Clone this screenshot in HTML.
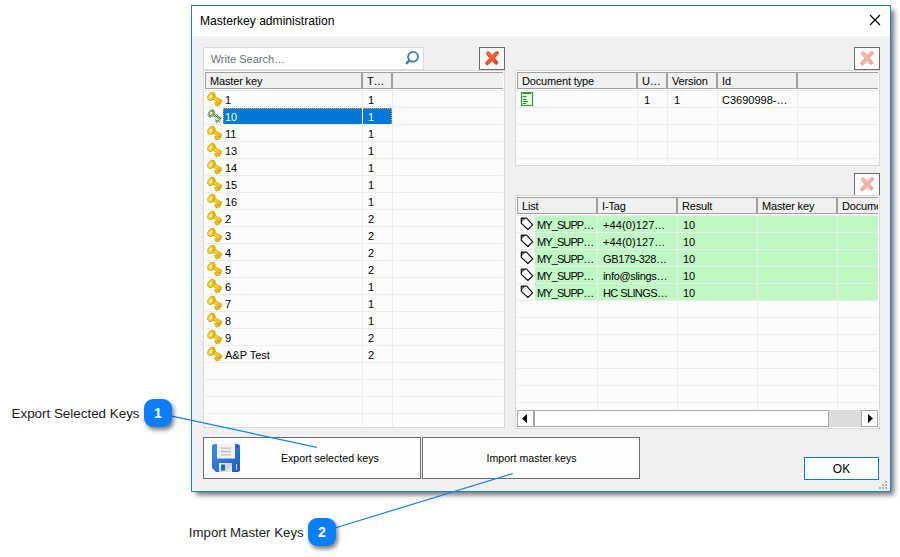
<!DOCTYPE html><html><head><meta charset="utf-8"><style>
*{margin:0;padding:0;box-sizing:border-box}
html,body{width:900px;height:557px;overflow:hidden;background:#fff;font-family:"Liberation Sans",sans-serif;color:#000}
div,svg{position:absolute}
.t{white-space:nowrap;font-size:11px;line-height:13px}
.grid{background:#fcfcfc;border:1px solid #d9d9d9;overflow:hidden}
.ht{letter-spacing:-.15px}
.hdr{background:#f0f0f0;border-top:1px solid #a0a0a0;border-bottom:1px solid #a0a0a0;border-left:1px solid #a0a0a0}
.hl{background:#a0a0a0}
.rl{height:1px;background:#ececec}
.cl{width:1px;background:#ececec}
.btnx{width:26px;height:23px;border:1px solid #6a6a6a;background:#fcfcfc}
.btn{border:1px solid #6d6d6d;background:#fdfdfd}
.badge{width:28px;height:28px;border-radius:9px;background:#0a7ef9;color:#fff;font-weight:bold;font-size:14px;line-height:28px;text-align:center;box-shadow:2px 3px 4px rgba(0,0,0,.5)}
.callt{font-size:13.4px;line-height:16px;color:#1a1a1a;white-space:nowrap}
</style></head><body>
<svg width="0" height="0"><defs><linearGradient id="gold" x1="0" y1="0" x2="1" y2="1"><stop offset="0" stop-color="#ffe14a"/><stop offset=".6" stop-color="#f2c400"/><stop offset="1" stop-color="#d9a800"/></linearGradient><pattern id="chk" width="2" height="2" patternUnits="userSpaceOnUse"><rect width="2" height="2" fill="#1f7fd0"/><rect width="1" height="1" fill="#f0d020"/><rect x="1" y="1" width="1" height="1" fill="#f0d020"/></pattern><linearGradient id="redx" x1="0" y1="0" x2="1" y2="1"><stop offset="0" stop-color="#ff7a50"/><stop offset="1" stop-color="#f03a10"/></linearGradient><linearGradient id="flop" x1="0" y1="0" x2="1" y2="1"><stop offset="0" stop-color="#3f8ee6"/><stop offset="1" stop-color="#1a5cc0"/></linearGradient><linearGradient id="shut" x1="0" y1="0" x2="1" y2="1"><stop offset="0" stop-color="#f4f4f4"/><stop offset=".5" stop-color="#d0d0d0"/><stop offset="1" stop-color="#f0f0f0"/></linearGradient></defs></svg>
<div style="left:191px;top:5px;width:700px;height:487px;border:1px solid #1c7fd6;background:#f0f0f0;box-shadow:4px 4px 5px -1px rgba(0,0,0,.55)"></div>
<div style="left:192px;top:6px;width:698px;height:30px;background:#fff"></div>
<div class="t" style="left:200px;top:14px;font-size:12.1px;line-height:14px">Masterkey administration</div>
<svg style="left:869px;top:14px" width="12" height="12" viewBox="0 0 12 12"><path d="M1 1L11 11M11 1L1 11" stroke="#000" stroke-width="1.1"/></svg>
<div style="left:203px;top:47px;width:221px;height:23px;background:#fff;border:1px solid #dcdcdc"></div>
<div class="t" style="left:210.7px;top:53px;color:#6b6d78">Write Search…</div>
<svg style="left:403px;top:50px" width="18" height="18" viewBox="0 0 18 18"><circle cx="10" cy="6.8" r="4.9" fill="none" stroke="#3d7ab8" stroke-width="1.9"/><path d="M6.4 10.4L3 13.8" stroke="#3d7ab8" stroke-width="2.4"/></svg>
<div class="btnx" style="left:479px;top:47px"></div>
<svg style="left:484px;top:50px;opacity:1" width="16" height="16" viewBox="0 0 16 16"><path d="M2.5 3.2C3.2 1.6 4.6 1.3 5.6 2.6L8.2 5.6 11.6 2C12.6 1.2 14.4 1.6 14.4 2.8 14.6 3.6 13.6 4.6 10.4 8L13.6 11.6C14.4 12.8 13.4 14.6 11.8 14.4L8.2 10.6 4.2 14.6C3 15.2 1.4 14.4 1.6 13 1.8 12.2 2.6 11.6 6 8.2L3 4.8C2.6 4.2 2.4 3.7 2.5 3.2Z" fill="url(#redx)" stroke="#cc2a08" stroke-width=".8"/></svg>
<div class="btnx" style="left:854px;top:47px"></div>
<svg style="left:859px;top:50px;opacity:.45" width="16" height="16" viewBox="0 0 16 16"><path d="M2.5 3.2C3.2 1.6 4.6 1.3 5.6 2.6L8.2 5.6 11.6 2C12.6 1.2 14.4 1.6 14.4 2.8 14.6 3.6 13.6 4.6 10.4 8L13.6 11.6C14.4 12.8 13.4 14.6 11.8 14.4L8.2 10.6 4.2 14.6C3 15.2 1.4 14.4 1.6 13 1.8 12.2 2.6 11.6 6 8.2L3 4.8C2.6 4.2 2.4 3.7 2.5 3.2Z" fill="url(#redx)" stroke="#cc2a08" stroke-width=".8"/></svg>
<div class="btnx" style="left:854px;top:173px"></div>
<svg style="left:859px;top:176px;opacity:.45" width="16" height="16" viewBox="0 0 16 16"><path d="M2.5 3.2C3.2 1.6 4.6 1.3 5.6 2.6L8.2 5.6 11.6 2C12.6 1.2 14.4 1.6 14.4 2.8 14.6 3.6 13.6 4.6 10.4 8L13.6 11.6C14.4 12.8 13.4 14.6 11.8 14.4L8.2 10.6 4.2 14.6C3 15.2 1.4 14.4 1.6 13 1.8 12.2 2.6 11.6 6 8.2L3 4.8C2.6 4.2 2.4 3.7 2.5 3.2Z" fill="url(#redx)" stroke="#cc2a08" stroke-width=".8"/></svg>
<div class="grid" style="left:203px;top:70px;width:302px;height:358px"></div>
<div class="hdr" style="left:205px;top:72px;width:298px;height:17px"></div>
<div class="hl" style="left:361px;top:72px;width:2px;height:17px"></div>
<div class="hl" style="left:391px;top:72px;width:2px;height:17px"></div>
<div class="rl" style="left:205px;top:90px;width:298px"></div>
<div class="rl" style="left:205px;top:107px;width:298px"></div>
<div class="rl" style="left:205px;top:124px;width:298px"></div>
<div class="rl" style="left:205px;top:141px;width:298px"></div>
<div class="rl" style="left:205px;top:158px;width:298px"></div>
<div class="rl" style="left:205px;top:175px;width:298px"></div>
<div class="rl" style="left:205px;top:192px;width:298px"></div>
<div class="rl" style="left:205px;top:209px;width:298px"></div>
<div class="rl" style="left:205px;top:226px;width:298px"></div>
<div class="rl" style="left:205px;top:243px;width:298px"></div>
<div class="rl" style="left:205px;top:260px;width:298px"></div>
<div class="rl" style="left:205px;top:277px;width:298px"></div>
<div class="rl" style="left:205px;top:294px;width:298px"></div>
<div class="rl" style="left:205px;top:311px;width:298px"></div>
<div class="rl" style="left:205px;top:328px;width:298px"></div>
<div class="rl" style="left:205px;top:345px;width:298px"></div>
<div class="rl" style="left:205px;top:362px;width:298px"></div>
<div class="rl" style="left:205px;top:379px;width:298px"></div>
<div class="rl" style="left:205px;top:396px;width:298px"></div>
<div class="rl" style="left:205px;top:413px;width:298px"></div>
<div class="cl" style="left:362px;top:89px;height:337px"></div>
<div class="cl" style="left:392px;top:89px;height:337px"></div>
<div class="t ht" style="left:210px;top:75px">Master key</div>
<div class="t ht" style="left:367px;top:75px">T…</div>
<svg style="left:206px;top:90px" width="18" height="18" viewBox="0 0 18 18"><g fill="url(#gold)" stroke="#c39200" stroke-width=".6"><path d="M7.6 5.6L15.8 10.3 14.9 13.3 8.6 12.2 9.6 15.4 11 16.2 12.2 14.6 13.2 15.8 14 13.2 7 9.2Z"/><ellipse cx="5.4" cy="6.4" rx="4.6" ry="3.2" transform="rotate(-58 5.4 6.4)"/></g><ellipse cx="4.9" cy="6.5" rx="1.8" ry=".9" transform="rotate(-60 4.9 6.5)" fill="#fff"/></svg>
<div class="t" style="left:225px;top:94px">1</div>
<div class="t" style="left:368px;top:94px">1</div>
<div style="left:223px;top:108px;width:139px;height:16px;background:#0078d7;border-top:1px dotted #f0a040;border-left:1px dotted #f0a040"></div>
<div style="left:363px;top:108px;width:29px;height:16px;background:#0078d7;border-top:1px dotted #f0a040;border-right:1px dotted #f0a040"></div>
<div style="left:362px;top:108px;width:1px;height:16px;background:#fcfcfc"></div>
<svg style="left:206px;top:107px" width="18" height="18" viewBox="0 0 18 18"><g fill="url(#chk)" stroke="none" stroke-width=".6"><path d="M7.6 5.6L15.8 10.3 14.9 13.3 8.6 12.2 9.6 15.4 11 16.2 12.2 14.6 13.2 15.8 14 13.2 7 9.2Z"/><ellipse cx="5.4" cy="6.4" rx="4.6" ry="3.2" transform="rotate(-58 5.4 6.4)"/></g><ellipse cx="4.9" cy="6.5" rx="1.8" ry=".9" transform="rotate(-60 4.9 6.5)" fill="#fff"/></svg>
<div class="t" style="left:225px;top:111px;color:#fff">10</div>
<div class="t" style="left:368px;top:111px;color:#fff">1</div>
<svg style="left:206px;top:124px" width="18" height="18" viewBox="0 0 18 18"><g fill="url(#gold)" stroke="#c39200" stroke-width=".6"><path d="M7.6 5.6L15.8 10.3 14.9 13.3 8.6 12.2 9.6 15.4 11 16.2 12.2 14.6 13.2 15.8 14 13.2 7 9.2Z"/><ellipse cx="5.4" cy="6.4" rx="4.6" ry="3.2" transform="rotate(-58 5.4 6.4)"/></g><ellipse cx="4.9" cy="6.5" rx="1.8" ry=".9" transform="rotate(-60 4.9 6.5)" fill="#fff"/></svg>
<div class="t" style="left:225px;top:128px">11</div>
<div class="t" style="left:368px;top:128px">1</div>
<svg style="left:206px;top:141px" width="18" height="18" viewBox="0 0 18 18"><g fill="url(#gold)" stroke="#c39200" stroke-width=".6"><path d="M7.6 5.6L15.8 10.3 14.9 13.3 8.6 12.2 9.6 15.4 11 16.2 12.2 14.6 13.2 15.8 14 13.2 7 9.2Z"/><ellipse cx="5.4" cy="6.4" rx="4.6" ry="3.2" transform="rotate(-58 5.4 6.4)"/></g><ellipse cx="4.9" cy="6.5" rx="1.8" ry=".9" transform="rotate(-60 4.9 6.5)" fill="#fff"/></svg>
<div class="t" style="left:225px;top:145px">13</div>
<div class="t" style="left:368px;top:145px">1</div>
<svg style="left:206px;top:158px" width="18" height="18" viewBox="0 0 18 18"><g fill="url(#gold)" stroke="#c39200" stroke-width=".6"><path d="M7.6 5.6L15.8 10.3 14.9 13.3 8.6 12.2 9.6 15.4 11 16.2 12.2 14.6 13.2 15.8 14 13.2 7 9.2Z"/><ellipse cx="5.4" cy="6.4" rx="4.6" ry="3.2" transform="rotate(-58 5.4 6.4)"/></g><ellipse cx="4.9" cy="6.5" rx="1.8" ry=".9" transform="rotate(-60 4.9 6.5)" fill="#fff"/></svg>
<div class="t" style="left:225px;top:162px">14</div>
<div class="t" style="left:368px;top:162px">1</div>
<svg style="left:206px;top:175px" width="18" height="18" viewBox="0 0 18 18"><g fill="url(#gold)" stroke="#c39200" stroke-width=".6"><path d="M7.6 5.6L15.8 10.3 14.9 13.3 8.6 12.2 9.6 15.4 11 16.2 12.2 14.6 13.2 15.8 14 13.2 7 9.2Z"/><ellipse cx="5.4" cy="6.4" rx="4.6" ry="3.2" transform="rotate(-58 5.4 6.4)"/></g><ellipse cx="4.9" cy="6.5" rx="1.8" ry=".9" transform="rotate(-60 4.9 6.5)" fill="#fff"/></svg>
<div class="t" style="left:225px;top:179px">15</div>
<div class="t" style="left:368px;top:179px">1</div>
<svg style="left:206px;top:192px" width="18" height="18" viewBox="0 0 18 18"><g fill="url(#gold)" stroke="#c39200" stroke-width=".6"><path d="M7.6 5.6L15.8 10.3 14.9 13.3 8.6 12.2 9.6 15.4 11 16.2 12.2 14.6 13.2 15.8 14 13.2 7 9.2Z"/><ellipse cx="5.4" cy="6.4" rx="4.6" ry="3.2" transform="rotate(-58 5.4 6.4)"/></g><ellipse cx="4.9" cy="6.5" rx="1.8" ry=".9" transform="rotate(-60 4.9 6.5)" fill="#fff"/></svg>
<div class="t" style="left:225px;top:196px">16</div>
<div class="t" style="left:368px;top:196px">1</div>
<svg style="left:206px;top:209px" width="18" height="18" viewBox="0 0 18 18"><g fill="url(#gold)" stroke="#c39200" stroke-width=".6"><path d="M7.6 5.6L15.8 10.3 14.9 13.3 8.6 12.2 9.6 15.4 11 16.2 12.2 14.6 13.2 15.8 14 13.2 7 9.2Z"/><ellipse cx="5.4" cy="6.4" rx="4.6" ry="3.2" transform="rotate(-58 5.4 6.4)"/></g><ellipse cx="4.9" cy="6.5" rx="1.8" ry=".9" transform="rotate(-60 4.9 6.5)" fill="#fff"/></svg>
<div class="t" style="left:225px;top:213px">2</div>
<div class="t" style="left:368px;top:213px">2</div>
<svg style="left:206px;top:226px" width="18" height="18" viewBox="0 0 18 18"><g fill="url(#gold)" stroke="#c39200" stroke-width=".6"><path d="M7.6 5.6L15.8 10.3 14.9 13.3 8.6 12.2 9.6 15.4 11 16.2 12.2 14.6 13.2 15.8 14 13.2 7 9.2Z"/><ellipse cx="5.4" cy="6.4" rx="4.6" ry="3.2" transform="rotate(-58 5.4 6.4)"/></g><ellipse cx="4.9" cy="6.5" rx="1.8" ry=".9" transform="rotate(-60 4.9 6.5)" fill="#fff"/></svg>
<div class="t" style="left:225px;top:230px">3</div>
<div class="t" style="left:368px;top:230px">2</div>
<svg style="left:206px;top:243px" width="18" height="18" viewBox="0 0 18 18"><g fill="url(#gold)" stroke="#c39200" stroke-width=".6"><path d="M7.6 5.6L15.8 10.3 14.9 13.3 8.6 12.2 9.6 15.4 11 16.2 12.2 14.6 13.2 15.8 14 13.2 7 9.2Z"/><ellipse cx="5.4" cy="6.4" rx="4.6" ry="3.2" transform="rotate(-58 5.4 6.4)"/></g><ellipse cx="4.9" cy="6.5" rx="1.8" ry=".9" transform="rotate(-60 4.9 6.5)" fill="#fff"/></svg>
<div class="t" style="left:225px;top:247px">4</div>
<div class="t" style="left:368px;top:247px">2</div>
<svg style="left:206px;top:260px" width="18" height="18" viewBox="0 0 18 18"><g fill="url(#gold)" stroke="#c39200" stroke-width=".6"><path d="M7.6 5.6L15.8 10.3 14.9 13.3 8.6 12.2 9.6 15.4 11 16.2 12.2 14.6 13.2 15.8 14 13.2 7 9.2Z"/><ellipse cx="5.4" cy="6.4" rx="4.6" ry="3.2" transform="rotate(-58 5.4 6.4)"/></g><ellipse cx="4.9" cy="6.5" rx="1.8" ry=".9" transform="rotate(-60 4.9 6.5)" fill="#fff"/></svg>
<div class="t" style="left:225px;top:264px">5</div>
<div class="t" style="left:368px;top:264px">2</div>
<svg style="left:206px;top:277px" width="18" height="18" viewBox="0 0 18 18"><g fill="url(#gold)" stroke="#c39200" stroke-width=".6"><path d="M7.6 5.6L15.8 10.3 14.9 13.3 8.6 12.2 9.6 15.4 11 16.2 12.2 14.6 13.2 15.8 14 13.2 7 9.2Z"/><ellipse cx="5.4" cy="6.4" rx="4.6" ry="3.2" transform="rotate(-58 5.4 6.4)"/></g><ellipse cx="4.9" cy="6.5" rx="1.8" ry=".9" transform="rotate(-60 4.9 6.5)" fill="#fff"/></svg>
<div class="t" style="left:225px;top:281px">6</div>
<div class="t" style="left:368px;top:281px">1</div>
<svg style="left:206px;top:294px" width="18" height="18" viewBox="0 0 18 18"><g fill="url(#gold)" stroke="#c39200" stroke-width=".6"><path d="M7.6 5.6L15.8 10.3 14.9 13.3 8.6 12.2 9.6 15.4 11 16.2 12.2 14.6 13.2 15.8 14 13.2 7 9.2Z"/><ellipse cx="5.4" cy="6.4" rx="4.6" ry="3.2" transform="rotate(-58 5.4 6.4)"/></g><ellipse cx="4.9" cy="6.5" rx="1.8" ry=".9" transform="rotate(-60 4.9 6.5)" fill="#fff"/></svg>
<div class="t" style="left:225px;top:298px">7</div>
<div class="t" style="left:368px;top:298px">1</div>
<svg style="left:206px;top:311px" width="18" height="18" viewBox="0 0 18 18"><g fill="url(#gold)" stroke="#c39200" stroke-width=".6"><path d="M7.6 5.6L15.8 10.3 14.9 13.3 8.6 12.2 9.6 15.4 11 16.2 12.2 14.6 13.2 15.8 14 13.2 7 9.2Z"/><ellipse cx="5.4" cy="6.4" rx="4.6" ry="3.2" transform="rotate(-58 5.4 6.4)"/></g><ellipse cx="4.9" cy="6.5" rx="1.8" ry=".9" transform="rotate(-60 4.9 6.5)" fill="#fff"/></svg>
<div class="t" style="left:225px;top:315px">8</div>
<div class="t" style="left:368px;top:315px">1</div>
<svg style="left:206px;top:328px" width="18" height="18" viewBox="0 0 18 18"><g fill="url(#gold)" stroke="#c39200" stroke-width=".6"><path d="M7.6 5.6L15.8 10.3 14.9 13.3 8.6 12.2 9.6 15.4 11 16.2 12.2 14.6 13.2 15.8 14 13.2 7 9.2Z"/><ellipse cx="5.4" cy="6.4" rx="4.6" ry="3.2" transform="rotate(-58 5.4 6.4)"/></g><ellipse cx="4.9" cy="6.5" rx="1.8" ry=".9" transform="rotate(-60 4.9 6.5)" fill="#fff"/></svg>
<div class="t" style="left:225px;top:332px">9</div>
<div class="t" style="left:368px;top:332px">2</div>
<svg style="left:206px;top:345px" width="18" height="18" viewBox="0 0 18 18"><g fill="url(#gold)" stroke="#c39200" stroke-width=".6"><path d="M7.6 5.6L15.8 10.3 14.9 13.3 8.6 12.2 9.6 15.4 11 16.2 12.2 14.6 13.2 15.8 14 13.2 7 9.2Z"/><ellipse cx="5.4" cy="6.4" rx="4.6" ry="3.2" transform="rotate(-58 5.4 6.4)"/></g><ellipse cx="4.9" cy="6.5" rx="1.8" ry=".9" transform="rotate(-60 4.9 6.5)" fill="#fff"/></svg>
<div class="t" style="left:225px;top:349px">A&amp;P Test</div>
<div class="t" style="left:368px;top:349px">2</div>
<div class="grid" style="left:515px;top:70px;width:365px;height:96px"></div>
<div class="hdr" style="left:517px;top:72px;width:361px;height:17px"></div>
<div class="hl" style="left:636px;top:72px;width:2px;height:17px"></div>
<div class="hl" style="left:666px;top:72px;width:2px;height:17px"></div>
<div class="hl" style="left:716px;top:72px;width:2px;height:17px"></div>
<div class="hl" style="left:796px;top:72px;width:2px;height:17px"></div>
<div class="rl" style="left:517px;top:90px;width:361px"></div>
<div class="rl" style="left:517px;top:107px;width:361px"></div>
<div class="rl" style="left:517px;top:124px;width:361px"></div>
<div class="rl" style="left:517px;top:141px;width:361px"></div>
<div class="rl" style="left:517px;top:158px;width:361px"></div>
<div class="cl" style="left:637px;top:89px;height:74px"></div>
<div class="cl" style="left:667px;top:89px;height:74px"></div>
<div class="cl" style="left:717px;top:89px;height:74px"></div>
<div class="cl" style="left:797px;top:89px;height:74px"></div>
<div class="t ht" style="left:522px;top:75px">Document type</div>
<div class="t ht" style="left:642px;top:75px">U…</div>
<div class="t ht" style="left:672px;top:75px">Version</div>
<div class="t ht" style="left:722px;top:75px">Id</div>
<svg style="left:520px;top:91px" width="14" height="16" viewBox="0 0 14 16"><defs><linearGradient id="dg" x1="0" y1="0" x2="1" y2="1"><stop offset="0" stop-color="#d8f4d0"/><stop offset="1" stop-color="#f8fff6"/></linearGradient></defs><rect x="1.5" y="1.5" width="11" height="13" fill="url(#dg)" stroke="#3f9a3a" stroke-width="1.2"/><path d="M3 2.5h8M3 5.5h3.5M3 8.5h3.5M3 10.5h5M3 12.5h3" stroke="#1f9628" stroke-width="1"/></svg>
<div class="t" style="left:644px;top:94px">1</div>
<div class="t" style="left:674px;top:94px">1</div>
<div class="t" style="left:722px;top:94px">C3690998-…</div>
<div class="grid" style="left:515px;top:195px;width:365px;height:234px"></div>
<div style="left:535px;top:216px;width:343px;height:16px;background:#c0f8c4"></div>
<div style="left:535px;top:233px;width:343px;height:16px;background:#c0f8c4"></div>
<div style="left:535px;top:250px;width:343px;height:16px;background:#c0f8c4"></div>
<div style="left:535px;top:267px;width:343px;height:16px;background:#c0f8c4"></div>
<div style="left:535px;top:284px;width:343px;height:16px;background:#c0f8c4"></div>
<div class="hdr" style="left:517px;top:197px;width:361px;height:17px"></div>
<div class="hl" style="left:596px;top:197px;width:2px;height:17px"></div>
<div class="hl" style="left:676px;top:197px;width:2px;height:17px"></div>
<div class="hl" style="left:756px;top:197px;width:2px;height:17px"></div>
<div class="hl" style="left:836px;top:197px;width:2px;height:17px"></div>
<div class="rl" style="left:517px;top:215px;width:361px"></div>
<div class="rl" style="left:517px;top:232px;width:361px"></div>
<div class="rl" style="left:517px;top:249px;width:361px"></div>
<div class="rl" style="left:517px;top:266px;width:361px"></div>
<div class="rl" style="left:517px;top:283px;width:361px"></div>
<div class="rl" style="left:517px;top:300px;width:361px"></div>
<div class="rl" style="left:517px;top:317px;width:361px"></div>
<div class="rl" style="left:517px;top:334px;width:361px"></div>
<div class="rl" style="left:517px;top:351px;width:361px"></div>
<div class="rl" style="left:517px;top:368px;width:361px"></div>
<div class="rl" style="left:517px;top:385px;width:361px"></div>
<div class="rl" style="left:517px;top:402px;width:361px"></div>
<div class="cl" style="left:597px;top:214px;height:196px"></div>
<div class="cl" style="left:677px;top:214px;height:196px"></div>
<div class="cl" style="left:757px;top:214px;height:196px"></div>
<div class="cl" style="left:837px;top:214px;height:196px"></div>
<div class="t ht" style="left:522px;top:200px">List</div>
<div class="t ht" style="left:602px;top:200px">I-Tag</div>
<div class="t ht" style="left:682px;top:200px">Result</div>
<div class="t ht" style="left:762px;top:200px">Master key</div>
<div style="left:842px;top:200px;width:36px;height:14px;overflow:hidden"><div class="t ht" style="left:0;top:0">Document</div></div>
<svg style="left:520px;top:217px" width="14" height="13" viewBox="0 0 14 13"><path d="M1.3 1.2H6.6L12.7 7.9 7.9 12.5 1.3 6.4Z" fill="#fff" stroke="#111" stroke-width="1.2" stroke-linejoin="round"/><path d="M1.3 1.2H5.4L1.3 5.6Z" fill="#1a1a1a"/><circle cx="2.9" cy="2.9" r=".75" fill="#ddd"/></svg>
<div class="t" style="left:537px;top:219px;letter-spacing:-.9px">MY_SUPP…</div>
<div class="t" style="left:603px;top:219px;letter-spacing:0.1px">+44(0)127…</div>
<div class="t" style="left:683px;top:219px">10</div>
<svg style="left:520px;top:234px" width="14" height="13" viewBox="0 0 14 13"><path d="M1.3 1.2H6.6L12.7 7.9 7.9 12.5 1.3 6.4Z" fill="#fff" stroke="#111" stroke-width="1.2" stroke-linejoin="round"/><path d="M1.3 1.2H5.4L1.3 5.6Z" fill="#1a1a1a"/><circle cx="2.9" cy="2.9" r=".75" fill="#ddd"/></svg>
<div class="t" style="left:537px;top:236px;letter-spacing:-.9px">MY_SUPP…</div>
<div class="t" style="left:603px;top:236px;letter-spacing:0.1px">+44(0)127…</div>
<div class="t" style="left:683px;top:236px">10</div>
<svg style="left:520px;top:251px" width="14" height="13" viewBox="0 0 14 13"><path d="M1.3 1.2H6.6L12.7 7.9 7.9 12.5 1.3 6.4Z" fill="#fff" stroke="#111" stroke-width="1.2" stroke-linejoin="round"/><path d="M1.3 1.2H5.4L1.3 5.6Z" fill="#1a1a1a"/><circle cx="2.9" cy="2.9" r=".75" fill="#ddd"/></svg>
<div class="t" style="left:537px;top:253px;letter-spacing:-.9px">MY_SUPP…</div>
<div class="t" style="left:603px;top:253px;letter-spacing:-0.35px">GB179-328…</div>
<div class="t" style="left:683px;top:253px">10</div>
<svg style="left:520px;top:268px" width="14" height="13" viewBox="0 0 14 13"><path d="M1.3 1.2H6.6L12.7 7.9 7.9 12.5 1.3 6.4Z" fill="#fff" stroke="#111" stroke-width="1.2" stroke-linejoin="round"/><path d="M1.3 1.2H5.4L1.3 5.6Z" fill="#1a1a1a"/><circle cx="2.9" cy="2.9" r=".75" fill="#ddd"/></svg>
<div class="t" style="left:537px;top:270px;letter-spacing:-.9px">MY_SUPP…</div>
<div class="t" style="left:603px;top:270px;letter-spacing:-0.33px">info@slings…</div>
<div class="t" style="left:683px;top:270px">10</div>
<svg style="left:520px;top:285px" width="14" height="13" viewBox="0 0 14 13"><path d="M1.3 1.2H6.6L12.7 7.9 7.9 12.5 1.3 6.4Z" fill="#fff" stroke="#111" stroke-width="1.2" stroke-linejoin="round"/><path d="M1.3 1.2H5.4L1.3 5.6Z" fill="#1a1a1a"/><circle cx="2.9" cy="2.9" r=".75" fill="#ddd"/></svg>
<div class="t" style="left:537px;top:287px;letter-spacing:-.9px">MY_SUPP…</div>
<div class="t" style="left:603px;top:287px;letter-spacing:-0.6px">HC SLINGS…</div>
<div class="t" style="left:683px;top:287px">10</div>
<div style="left:517px;top:410px;width:361px;height:17px;background:#dcdcdc"></div>
<div style="left:517px;top:410px;width:17px;height:17px;background:#fff;border:1px solid #a8a8a8"></div>
<svg style="left:521px;top:413px" width="8" height="11"><path d="M6 1L1 5.5L6 10z" fill="#000"/></svg>
<div style="left:534px;top:410px;width:295px;height:17px;background:#fff;border:1px solid #a8a8a8"></div>
<div style="left:861px;top:410px;width:17px;height:17px;background:#fff;border:1px solid #a8a8a8"></div>
<svg style="left:866px;top:413px" width="8" height="11"><path d="M2 1L7 5.5L2 10z" fill="#000"/></svg>
<div class="btn" style="left:203px;top:437px;width:218px;height:42px"></div>
<div class="btn" style="left:422px;top:437px;width:218px;height:42px"></div>
<div class="t" style="left:281px;top:452px;font-size:10.6px">Export selected keys</div>
<div class="t" style="left:486.5px;top:452px;font-size:10.6px">Import master keys</div>
<svg style="left:212px;top:444px" width="28" height="28" viewBox="0 0 28 28"><path d="M2.5 0H25.5Q28 0 28 2.5V25.5Q28 28 25.5 28H4L0 24V2.5Q0 0 2.5 0Z" fill="url(#flop)"/><rect x="5" y="0" width="18" height="14.5" fill="#f2f2f2"/><rect x="5" y="14" width="18" height="1" fill="#9cb8e0"/><path d="M9 4.2h10M9 7.5h10M9 10.8h10" stroke="#bdbdbd" stroke-width="1.3"/><rect x="7" y="19" width="13" height="9" fill="url(#shut)"/><rect x="9" y="20.5" width="4" height="6" fill="#1f67c0"/><rect x="24" y="20" width="1" height="6" fill="#bcd4f4"/><rect x="24.5" y="2" width="1.5" height="1.5" fill="#234"/></svg>
<div style="left:804px;top:457px;width:75px;height:23px;background:#fff;border:1px solid #0078d7"></div>
<div class="t" style="left:804px;top:462px;width:75px;text-align:center;font-size:12px;line-height:14px">OK</div>
<div style="left:885px;top:481px;width:2px;height:2px;background:#b4b4b4"></div>
<div style="left:882px;top:484px;width:2px;height:2px;background:#b4b4b4"></div>
<div style="left:885px;top:484px;width:2px;height:2px;background:#b4b4b4"></div>
<div style="left:879px;top:487px;width:2px;height:2px;background:#b4b4b4"></div>
<div style="left:882px;top:487px;width:2px;height:2px;background:#b4b4b4"></div>
<div style="left:885px;top:487px;width:2px;height:2px;background:#b4b4b4"></div>
<svg style="left:0;top:0" width="900" height="557"><path d="M172 416.1L317 447.4M335 528L512.8 473.6" stroke="#1286f8" stroke-width="1.25" fill="none"/></svg>
<div class="callt" style="left:11.5px;top:406px">Export Selected Keys</div>
<div class="badge" style="left:144px;top:399px">1</div>
<div class="callt" style="left:188.8px;top:525px;font-size:13.25px">Import Master Keys</div>
<div class="badge" style="left:308px;top:518px">2</div>
</body></html>
